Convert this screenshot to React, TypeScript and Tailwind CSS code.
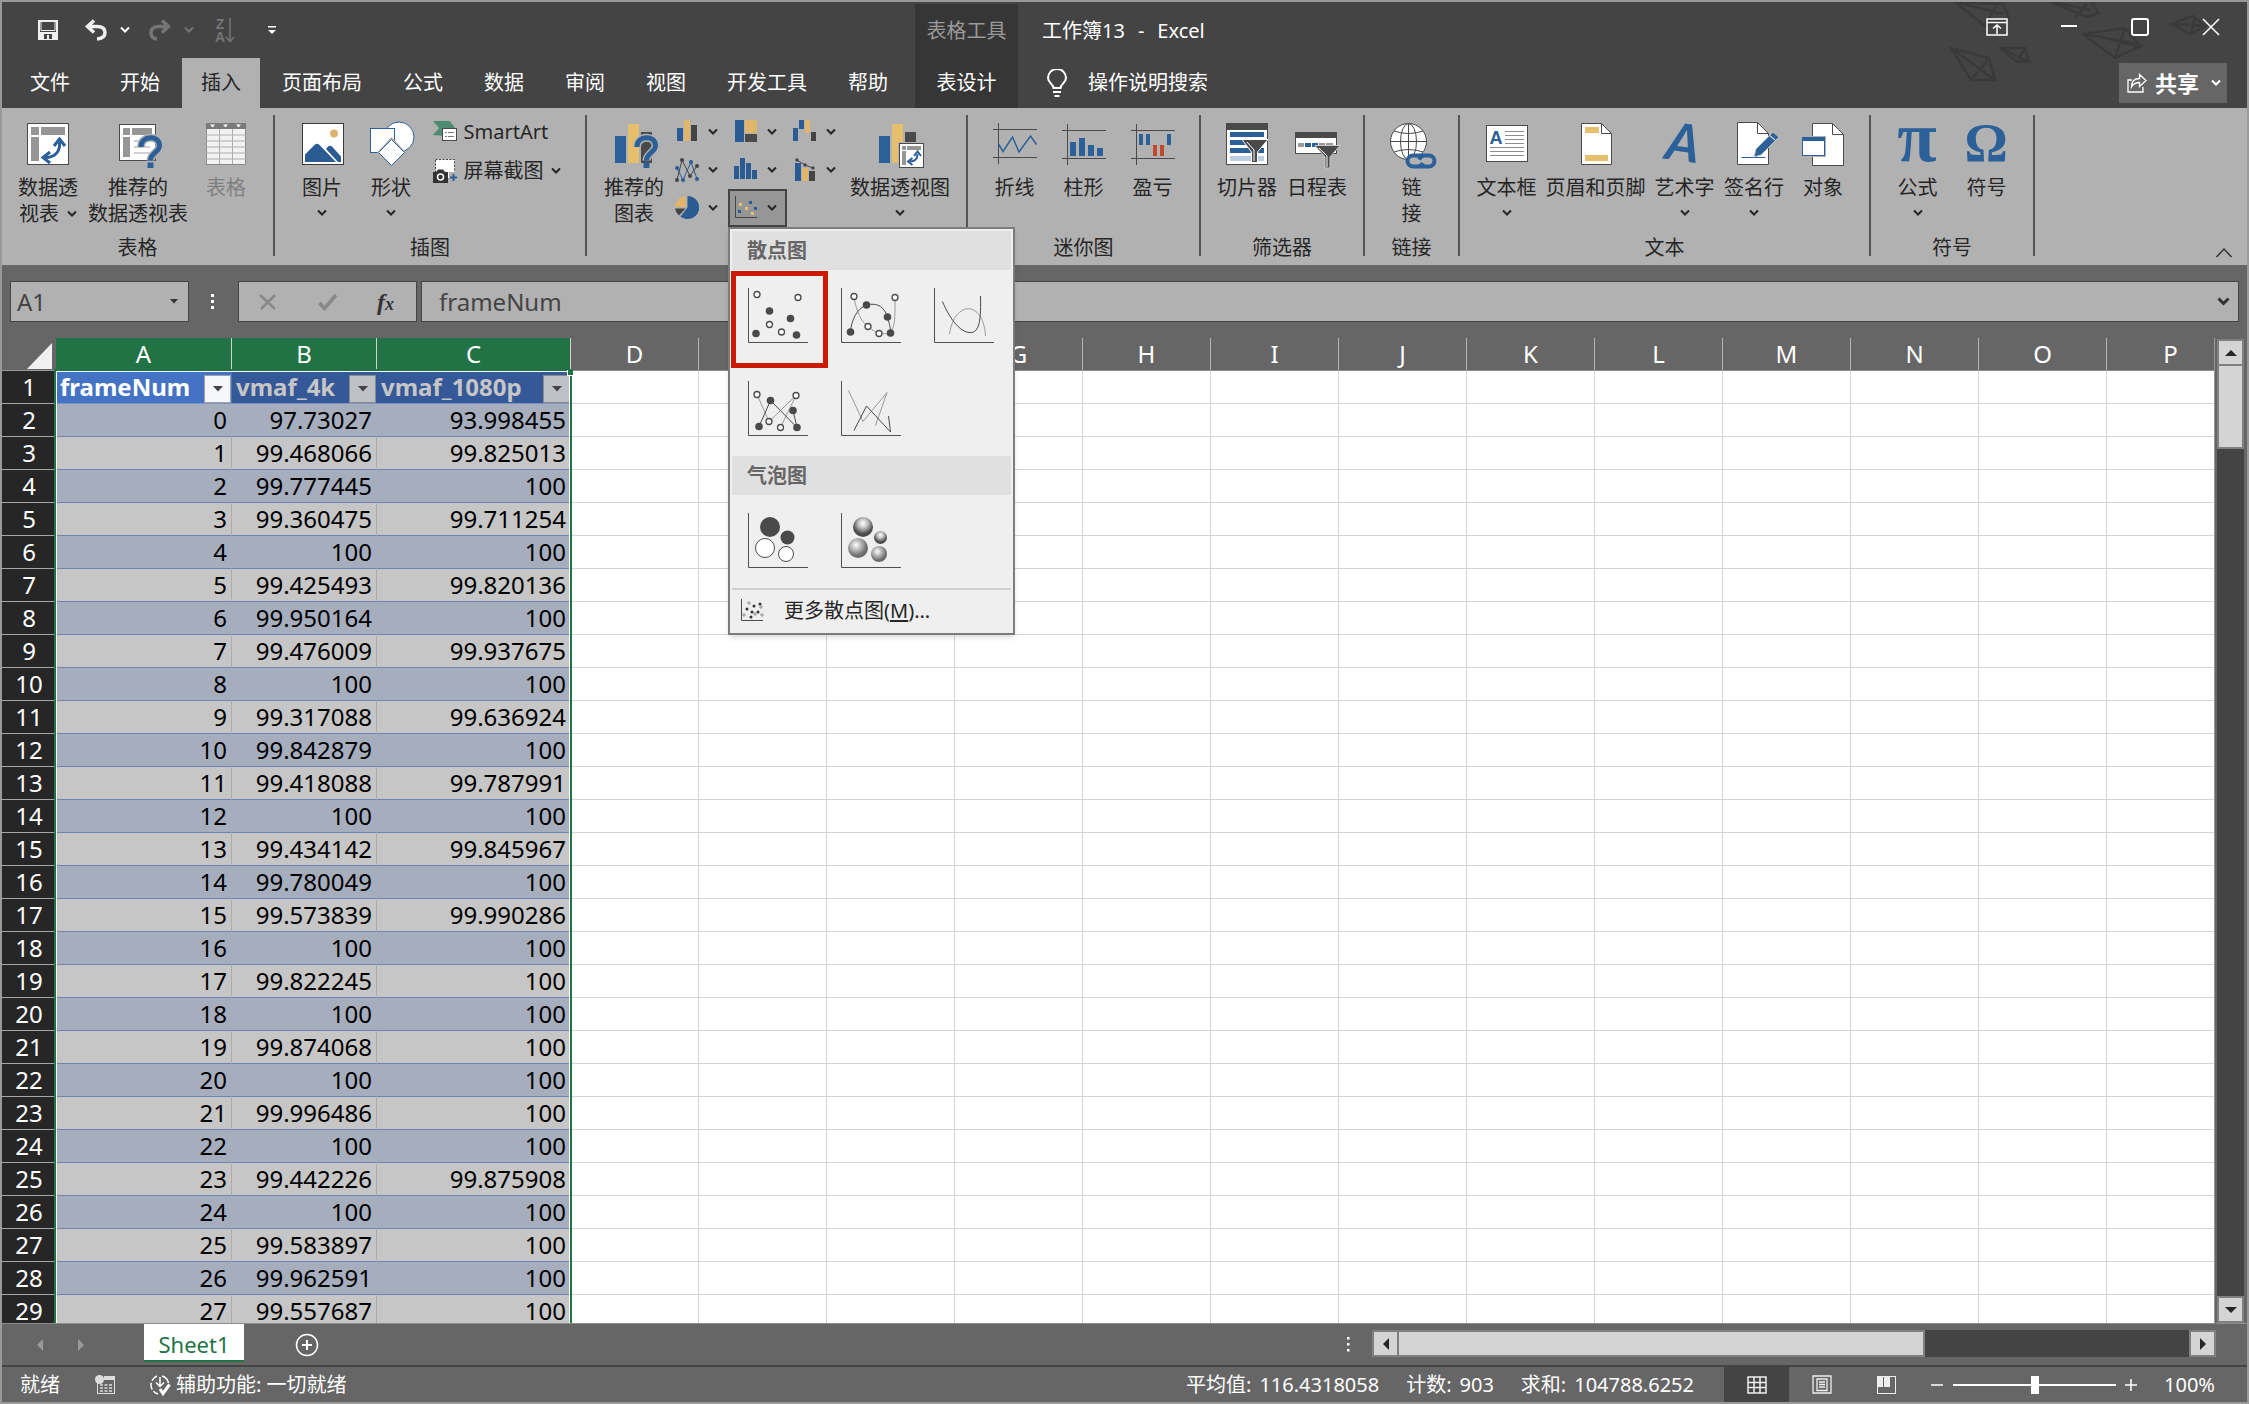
import React from "react";
import type { ReactNode } from "react";

const BLUE = "#2b6098";
const GOLD = "#e6bf6c";
const INK = "#4a4a4a";

/* ---------- shared glyphs ---------- */

function Chevron({ className = "" }: { className?: string }) {
  return (
    <svg width="10" height="8" viewBox="0 0 10 8" fill="none" stroke="currentColor" strokeWidth="2" className={className}>
      <path d="M1 1.5l4 4 4-4" />
    </svg>
  );
}

function Big({ children }: { children: ReactNode }) {
  return (
    <svg width="48" height="48" viewBox="0 0 48 48" fill="none" className="shrink-0 overflow-visible">
      {children}
    </svg>
  );
}

function Small({ children }: { children: ReactNode }) {
  return (
    <svg width="24" height="24" viewBox="0 0 24 24" fill="none" className="shrink-0">
      {children}
    </svg>
  );
}

function SwapArrow() {
  return (
    <g>
      <path d="M35.500 22c1 10-5 15.500-14 15.500" stroke={BLUE} strokeWidth="3" />
      <path d="M30 26l5.500-7 5.500 7M26 32l-7 5.500 7 5.500" stroke={BLUE} strokeWidth="3" />
    </g>
  );
}

function Question() {
  const d = "M27 27c0-12 18.500-12 18.500-1.500 0 7-9 7.500-9 15";
  return (
    <g>
      <path d={d} stroke="#b1b1b1" strokeWidth="8" />
      <path d={d} stroke={BLUE} strokeWidth="5" />
      <rect x="33.500" y="42.500" width="6" height="5.500" fill={BLUE} />
    </g>
  );
}

/* ---------- large ribbon icons ---------- */

const PivotIcon = () => (
  <Big>
    <rect x="3.5" y="3.5" width="41" height="41" fill="#fff" stroke={INK} />
    <path d="M7 7h8v8H7zM17 7h24v8H17zM7 17h8v24H7z" fill="#969696" />
    <SwapArrow />
  </Big>
);

const RecommendedPivotIcon = () => (
  <Big>
    <rect x="5.5" y="4.5" width="36" height="36" fill="#fff" stroke={INK} />
    <path d="M9 8h7v7H9zM18 8h20v7H18zM9 17h7v20H9z" fill="#969696" />
    <path d="M20 21h16M20 27h16M20 33h16" stroke="#d0d0d0" strokeWidth="2" />
    <Question />
  </Big>
);

const TableIcon = () => (
  <Big>
    <rect x="4.500" y="3.500" width="39" height="41" fill="#f2f2f2" stroke="#8a8a8a" />
    <rect x="4" y="3" width="40" height="6" fill="#7a7a7a" />
    <path d="M4 15h40M4 21h40M4 27h40M4 33h40M4 39h40M17.500 9v35M30.500 9v35" stroke="#adadad" />
    <path d="M8 4.500h5l-2.500 3zM21 4.500h5l-2.500 3zM34 4.500h5l-2.500 3z" fill="#fff" />
  </Big>
);

const PictureIcon = () => (
  <Big>
    <rect x="4.500" y="3.500" width="41" height="41" fill="#fff" stroke="#3a3a3a" />
    <circle cx="36" cy="13.500" r="4" fill="#e0b56c" />
    <path d="M7 42v-7.500L17 24.500q2-1.500 4 0L38 42z" fill="#2a5b92" />
    <path d="M28 29l2-2.500q2-1.500 4 0l9 10V42h-3z" fill="#2a5b92" />
  </Big>
);

const ShapesIcon = () => (
  <Big>
    <circle cx="32" cy="17" r="15" fill="#fff" stroke={BLUE} />
    <rect x="3.500" y="8.500" width="24" height="24" fill="#fff" stroke={BLUE} />
    <path d="M24.500 17L39 32.500 24.500 48 10 32.500z" fill="#b1b1b1" />
    <path d="M24.500 19.500L37.500 32.500 24.500 45.500 11.500 32.500z" fill="#fff" stroke={BLUE} />
  </Big>
);

const RecommendedChartIcon = () => (
  <Big>
    <rect x="5" y="16" width="11" height="27" fill={BLUE} />
    <rect x="18" y="4" width="11" height="39" fill={GOLD} />
    <rect x="31" y="12" width="11" height="31" fill={INK} />
    <Question />
  </Big>
);

const PivotChartIcon = () => (
  <Big>
    <rect x="3" y="16" width="11" height="27" fill={BLUE} />
    <rect x="16" y="4" width="11" height="39" fill={GOLD} />
    <rect x="29" y="12" width="11" height="20" fill={INK} />
    <rect x="22" y="22" width="27" height="27" fill="#b1b1b1" />
    <rect x="23.500" y="23.500" width="24" height="24" fill="#fff" stroke={INK} />
    <path d="M26 26h4v4h-4zM31 26h14v4H31zM26 31h4v14h-4z" fill="#969696" />
    <path d="M41.500 34c0 5-3 7.500-7.500 7.500" stroke={BLUE} strokeWidth="2" />
    <path d="M38 36l3.500-4.500L45 36M36.500 38L32 41.500l4.500 3.500" stroke={BLUE} strokeWidth="2" />
  </Big>
);

const SparkLineIcon = () => (
  <Big>
    <path d="M2 9.500h44M2 37.500h44M7.500 3v41" stroke={INK} />
    <path d="M7.500 24l4.500 7.500L21.500 17 28 32l11.500-16 6 8.500" stroke={BLUE} strokeWidth="1.500" />
  </Big>
);

const SparkColumnIcon = () => (
  <Big>
    <path d="M2 10.500h44M2 38.500h44M7.500 4v41" stroke={INK} />
    <path d="M10 22h6v14h-6zM19 18h6v18h-6zM28 25h6v11h-6zM37 28h6v8h-6z" fill={BLUE} />
  </Big>
);

const WinLossIcon = () => (
  <Big>
    <path d="M2 10.500h44M2 38.500h44M7.500 4v41" stroke={INK} />
    <path d="M10 14h4v11h-4zM17 14h4v11h-4zM38 14h4v11h-4z" fill={BLUE} />
    <path d="M24 25h4v11h-4zM31 25h4v11h-4z" fill="#c04a2b" />
  </Big>
);

const SlicerIcon = () => (
  <Big>
    <rect x="3.500" y="3.500" width="41" height="41" fill="#fff" stroke={INK} />
    <rect x="3" y="3" width="42" height="7" fill={INK} />
    <path d="M7 12h34v5H7zM7 20h34v5H7zM7 28h34v5H7z" fill={BLUE} />
    <rect x="7" y="36" width="34" height="5" fill="#bccde4" />
    <path d="M19 19.500h26L34.500 32v10.500h-6V32z" fill={INK} stroke="#fff" />
    <path d="M24 22l7 8v11" stroke="#fff" />
  </Big>
);

const TimelineIcon = () => (
  <Big>
    <rect x="2.500" y="12.500" width="41" height="21" fill="#fff" stroke={INK} />
    <rect x="2" y="12" width="42" height="6" fill={INK} />
    <path d="M5 23h6v4H5zM26 23h6v4h-6zM33 23h7v4h-7z" fill="#9a9a9a" />
    <path d="M12 23h6v4h-6zM19 23h6v4h-6z" fill={BLUE} />
    <path d="M22 25.500h25L37 37v11h-5V37z" fill={INK} stroke="#c8c8c8" />
    <path d="M26 28l8 8v11" stroke="#fff" />
  </Big>
);

const LinkIcon = () => (
  <Big>
    <circle cx="20.500" cy="21.500" r="18" fill="#fff" stroke={INK} />
    <ellipse cx="20.500" cy="21.500" rx="8" ry="18" stroke={INK} />
    <path d="M20.500 3.500v36M2.500 21.500h36M6 11q14.500 5 29 0M6 32q14.500-5 29 0" stroke={INK} />
    <g strokeLinecap="round" strokeWidth="9" stroke="#b1b1b1">
      <path d="M23 41h21" />
    </g>
    <g stroke={BLUE} strokeWidth="4">
      <path d="M34 35.500h-9a5.500 5.500 0 0 0 0 11h5q3 0 5-3.500" />
      <path d="M31 46.500h10a5.500 5.500 0 0 0 0-11h-5q-3 0-5 4" />
    </g>
  </Big>
);

const TextBoxIcon = () => (
  <Big>
    <rect x="3.500" y="5.500" width="41" height="36" fill="#fff" stroke={INK} />
    <text x="13" y="24" textAnchor="middle" fontSize="18" fontWeight="700" fill={BLUE} fontFamily="Liberation Sans, sans-serif">A</text>
    <path d="M22 11.500h19M22 15.500h19M22 19.500h19M22 23.500h19M7 27.500h34M7 31.500h34M7 35.500h34" stroke="#8c8c8c" />
  </Big>
);

const HeaderFooterIcon = () => (
  <Big>
    <path d="M9.500 3.500h20l10 10v31h-30z" fill="#fff" stroke={INK} />
    <path d="M29.500 3.500v10h10" stroke={INK} />
    <path d="M13 7h14v6H13zM13 35h23v6H13z" fill={GOLD} />
  </Big>
);

const WordArtIcon = () => (
  <Big>
    <g transform="rotate(8 22 24)">
      <text x="22" y="41" textAnchor="middle" fontSize="52" fontWeight="700" fontStyle="italic" fill={BLUE} fontFamily="Lato, sans-serif">A</text>
    </g>
  </Big>
);

const SignatureIcon = () => (
  <Big>
    <path d="M7.500 2.500h20l11 11v31h-31z" fill="#fff" stroke={INK} />
    <path d="M27.500 2.500v11h11" stroke={INK} />
    <path d="M11.500 37.500h24" stroke={BLUE} />
    <path d="M24 37l2-8 17-17 6 5-18 18z" fill={BLUE} stroke="#c4c4c4" />
    <path d="M39 15l6 5" stroke="#c4c4c4" strokeWidth="1.500" />
  </Big>
);

const ObjectIcon = () => (
  <Big>
    <path d="M13.500 3.500h20l11 11v31h-31z" fill="#fff" stroke={INK} />
    <path d="M33.500 3.500v11h11" stroke={INK} />
    <rect x="2" y="16" width="25" height="21" fill="#b1b1b1" />
    <rect x="3.500" y="17.500" width="22" height="18" fill="#fff" stroke={BLUE} />
    <rect x="3" y="17" width="23" height="4" fill={BLUE} />
  </Big>
);

const PiIcon = () => (
  <Big>
    <text x="23" y="41" textAnchor="middle" fontSize="72" fontWeight="700" fill={BLUE} fontFamily="Liberation Serif, serif">π</text>
  </Big>
);

const OmegaIcon = () => (
  <Big>
    <text x="23" y="41" textAnchor="middle" fontSize="54" fontWeight="700" fill={BLUE} fontFamily="Liberation Serif, serif">Ω</text>
  </Big>
);

/* ---------- small chart icons ---------- */

const chartButtons: { label: string; icon: ReactNode }[] = [
  {
    label: "柱形图",
    icon: (
      <Small>
        <path d="M2 8h6v13H2z" fill="#2a5b92" />
        <path d="M9 0h6v21H9z" fill="#e0b56c" />
        <path d="M16 5h6v16h-6z" fill="#444" />
      </Small>
    ),
  },
  {
    label: "层次结构图",
    icon: (
      <Small>
        <path d="M1 0h9v22H1z" fill="#2a5b92" />
        <path d="M11 0h12v13H11z" fill="#e0b56c" />
        <path d="M11 14h12v8H11z" fill={INK} />
      </Small>
    ),
  },
  {
    label: "瀑布图",
    icon: (
      <Small>
        <path d="M0 8h5v13H0zM6 0h5v9H6z" fill="#2a5b92" />
        <path d="M12 0h5v13h-5z" fill="#e0b56c" />
        <path d="M18 12h5v9h-5z" fill="#444" />
      </Small>
    ),
  },
  {
    label: "折线图",
    icon: (
      <Small>
        <path d="M2 22L7 2l8 16 7-10" stroke="#444" />
        <path d="M2 10l6 12 8-18 6 17" stroke="#2a5b92" />
        <g fill="#444">
          <circle cx="2" cy="22" r="2" /><circle cx="7" cy="2" r="2" /><circle cx="15" cy="18" r="2" /><circle cx="22" cy="8" r="2" />
        </g>
        <g fill="#2a5b92">
          <circle cx="2" cy="10" r="2" /><circle cx="8" cy="22" r="2" /><circle cx="16" cy="4" r="2" /><circle cx="22" cy="21" r="2" />
        </g>
      </Small>
    ),
  },
  {
    label: "统计图",
    icon: (
      <Small>
        <path d="M0 8h5v13H0zM6 0h5v21H6zM12 5h5v16h-5zM18 12h5v9h-5z" fill="#2a5b92" />
      </Small>
    ),
  },
  {
    label: "组合图",
    icon: (
      <Small>
        <path d="M2 5h6v18H2z" fill="#2a5b92" />
        <path d="M9 10h6v13H9z" fill="#e0b56c" />
        <path d="M16 13h6v10h-6z" fill="#444" />
        <path d="M4 2l8 5 8 3" stroke="#444" />
        <circle cx="4" cy="2" r="1.700" fill="#444" /><circle cx="12" cy="7" r="1.700" fill="#444" /><circle cx="20" cy="10" r="1.700" fill="#444" />
      </Small>
    ),
  },
  {
    label: "饼图",
    icon: (
      <Small>
        <path d="M12.500 11.500V0a11.500 11.500 0 1 1-7 20.500z" fill="#2a5b92" />
        <path d="M11 11V0A11.500 11.500 0 0 0 0 11z" fill="#e0b56c" />
        <path d="M10.500 12.500H0a11 11 0 0 0 4 7z" fill="#444" />
      </Small>
    ),
  },
];

const ScatterSmall = () => (
  <Small>
    <path d="M1.500 0v21.500H23" stroke="#444" />
    <path d="M5 7h3v3H5zM11 11h3v3h-3zM17 16h3v3h-3z" fill="#e8bd74" />
    <path d="M15 5h3v3h-3zM20 11h3v3h-3zM4 14h3v3H4z" fill="#2a5b92" />
  </Small>
);

/* ---------- chart gallery ---------- */

type Dot = [number, number];

function Thumb({ children, filled = [], open = [] }: { children?: ReactNode; filled?: Dot[]; open?: Dot[] }) {
  return (
    <svg width="60" height="56" viewBox="0 0 60 56" fill="none">
      <path d="M.5 0v54.500H60" stroke="#505050" />
      {children}
      {filled.map(([x, y]) => (
        <circle key={`${x}-${y}`} cx={x} cy={y} r="3.800" fill={INK} />
      ))}
      {open.map(([x, y]) => (
        <circle key={`${x}-${y}`} cx={x} cy={y} r="3" fill="#fff" stroke={INK} strokeWidth="1.300" />
      ))}
    </svg>
  );
}

function Sphere({ cx, cy, r, id }: { cx: number; cy: number; r: number; id: string }) {
  return <circle cx={cx} cy={cy} r={r} fill={`url(#${id})`} />;
}

const scatterThumbs: { label: string; art: ReactNode }[] = [
  {
    label: "散点图",
    art: <Thumb open={[[9, 6.5], [50, 9.5], [21.5, 36.5], [33.5, 44]]} filled={[[21.5, 23], [42.5, 30.5], [8, 45.5], [48.5, 47]]} />,
  },
  {
    label: "带平滑线和数据标记的散点图",
    art: (
      <Thumb open={[[13, 8.5], [54, 9.5], [27, 38.5], [38, 45.5]]} filled={[[25.500, 17], [46.5, 29], [9.5, 44], [49.5, 45]]}>
        <path d="M13 8.500c2 15 8 26 14 30 5 4 8 6.500 12 7 14 1.500 15.500-5 15-36" stroke="#9a9a9a" />
        <path d="M9.500 44c1-12 6-23 16-27 12-3 18 3 21 12 1 5 3 8 3 16" stroke={INK} />
      </Thumb>
    ),
  },
  {
    label: "带平滑线的散点图",
    art: (
      <Thumb>
        <path d="M15.500 46c5-34 34-34 36 2" stroke="#9a9a9a" />
        <path d="M8.500 13.500c6 15 17 31 27.500 31 10 1 11-15 10.500-36.500" stroke={INK} />
      </Thumb>
    ),
  },
  {
    label: "带直线和数据标记的散点图",
    art: (
      <Thumb open={[[9, 13.5], [48, 14.5], [21, 40.5], [32.5, 46.5]]} filled={[[22.5, 19.5], [45, 29.5], [11, 45.5], [49, 46.5]]}>
        <path d="M9 13.500l12 27 27-26-15.500 32" stroke="#9a9a9a" />
        <path d="M11 45.500l11.500-26 26.500 27-4-17" stroke={INK} />
      </Thumb>
    ),
  },
  {
    label: "带直线的散点图",
    art: (
      <Thumb>
        <path d="M7.500 9.500L22 40.500l24-29-11.500 33" stroke="#9a9a9a" />
        <path d="M13 49.500L25.500 25l24 26-2-16" stroke={INK} />
      </Thumb>
    ),
  },
];

const bubbleThumbs: { label: string; art: ReactNode }[] = [
  {
    label: "气泡图",
    art: (
      <Thumb>
        <circle cx="22" cy="14" r="10" fill={INK} />
        <circle cx="39.500" cy="24.500" r="7" fill={INK} />
        <circle cx="17" cy="35" r="9.500" fill="#fff" stroke={INK} />
        <circle cx="38" cy="41" r="7.500" fill="#fff" stroke={INK} />
      </Thumb>
    ),
  },
  {
    label: "三维气泡图",
    art: (
      <Thumb>
        <defs>
          <radialGradient id="sphereDark" cx="0.5" cy="0.32" r="0.65">
            <stop offset="0" stopColor="#fff" />
            <stop offset="0.35" stopColor="#c4c4c4" />
            <stop offset="0.8" stopColor="#4c4c4c" />
          </radialGradient>
          <radialGradient id="sphereLight" cx="0.4" cy="0.35" r="0.65">
            <stop offset="0" stopColor="#fff" />
            <stop offset="0.4" stopColor="#b8b8b8" />
            <stop offset="0.85" stopColor="#6a6a6a" />
          </radialGradient>
        </defs>
        <Sphere cx={22} cy={14} r={10} id="sphereDark" />
        <Sphere cx={39.500} cy={24.500} r={6.500} id="sphereDark" />
        <Sphere cx={17} cy={35} r={10} id="sphereLight" />
        <Sphere cx={38} cy={41} r={8} id="sphereLight" />
      </Thumb>
    ),
  },
];

function ScatterMenu() {
  return (
    <div className="absolute left-0 top-full z-20 w-[287px] border-2 border-[#7c7c7c] bg-[#efefef] p-0.5 shadow-md">
      <h3 className="h-[39px] bg-[#e0e0e0] pl-[15px] text-xl font-bold leading-[39px] text-[#666]">散点图</h3>
      <div className="grid grid-cols-3">
        {scatterThumbs.map((t, i) => (
          <button key={t.label} aria-label={t.label} className="relative flex h-[93px] items-center justify-center pb-0.5 pr-0.5">
            {t.art}
            {i === 0 && <span className="absolute -inset-x-px top-px h-[97px] w-[97px] border-5 border-[#cc1a00]" />}
          </button>
        ))}
      </div>
      <h3 className="h-[39px] bg-[#e0e0e0] pl-[15px] text-xl font-bold leading-[39px] text-[#666]">气泡图</h3>
      <div className="grid grid-cols-3">
        {bubbleThumbs.map((t) => (
          <button key={t.label} aria-label={t.label} className="flex h-[93px] items-center justify-center pb-0.5 pr-0.5">
            {t.art}
          </button>
        ))}
      </div>
      <button className="flex h-[43px] w-full items-center gap-5 border-t-2 border-[#d0d0d0] pl-2 text-xl text-[#262626]">
        <Small>
          <path d="M1.500 0v21.500H23" stroke={INK} />
          <g fill="#333">
            <circle cx="7" cy="10" r="1.500" /><circle cx="14" cy="7" r="1.500" /><circle cx="20" cy="5" r="1.500" />
            <circle cx="12" cy="13" r="1.500" /><circle cx="18" cy="13" r="1.500" /><circle cx="11" cy="18" r="1.500" />
          </g>
          <g stroke="#777" strokeWidth=".8">
            <circle cx="9" cy="4" r="1.200" /><circle cx="21" cy="8" r="1.200" /><circle cx="4" cy="16" r="1.200" />
            <circle cx="15" cy="15" r="1.200" /><circle cx="22" cy="16" r="1.200" />
          </g>
        </Small>
        <span>更多散点图(<u className="underline-offset-2">M</u>)...</span>
      </button>
    </div>
  );
}

/* ---------- ribbon ---------- */

function Group({ label, className, children }: { label?: string; className: string; children: ReactNode }) {
  return (
    <>
      <section aria-label={label} className={`flex shrink-0 flex-col ${className}`}>
        <div className="flex flex-1 justify-center">{children}</div>
        <div className="mb-1 h-[26px] text-center leading-[26px]">{label}</div>
      </section>
      <div className="mb-[9px] mt-[7px] w-0.5 shrink-0 bg-[#555]" />
    </>
  );
}

function BigButton({
  icon,
  lines,
  arrow = "none",
  className,
  disabled = false,
}: {
  icon: ReactNode;
  lines: string[];
  arrow?: "none" | "inline" | "below";
  className: string;
  disabled?: boolean;
}) {
  return (
    <button disabled={disabled} className={`flex shrink-0 flex-col items-center whitespace-nowrap pt-3 disabled:text-[#808080] ${className}`}>
      {icon}
      <span className="mt-[7px] flex flex-col items-center leading-[26px]">
        {lines.map((line, i) => (
          <span key={line} className="flex items-center gap-2">
            {line}
            {arrow === "inline" && i === lines.length - 1 && <Chevron />}
          </span>
        ))}
      </span>
      {arrow === "below" && <Chevron className="mt-2" />}
    </button>
  );
}

function Ribbon() {
  return (
    <div className="relative z-10 flex h-[157px] shrink-0 bg-[#b1b1b1] text-xl text-[#262626]">
      <Group label="表格" className="w-[271px]">
        <div className="flex pr-[3px]">
          <BigButton className="w-[76px]" icon={<PivotIcon />} lines={["数据透", "视表"]} arrow="inline" />
          <BigButton className="w-[104px]" icon={<RecommendedPivotIcon />} lines={["推荐的", "数据透视表"]} />
          <BigButton className="w-[72px]" icon={<TableIcon />} lines={["表格"]} disabled />
        </div>
      </Group>
      <Group label="插图" className="w-[310px]">
        <div className="flex pr-3">
          <BigButton className="w-[69px]" icon={<PictureIcon />} lines={["图片"]} arrow="below" />
          <BigButton className="w-[69px]" icon={<ShapesIcon />} lines={["形状"]} arrow="below" />
          <div className="flex flex-col pl-[7px] pt-1">
            <button className="flex h-[39px] items-center gap-[7px]">
              <Small>
                <path d="M0 1h17l5 7H13v8L0 15l6-7z" fill="#4d8c73" />
                <rect x="9.500" y="8.500" width="14" height="12" fill="#fff" stroke={INK} />
                <path d="M12 12.500h2M15 12.500h6M12 16.500h2M15 16.500h6" stroke="#777" />
              </Small>
              SmartArt
            </button>
            <button className="flex h-[39px] items-center gap-[7px]">
              <Small>
                <rect x="2.500" y=".5" width="19" height="19" fill="#fff" stroke="#444" strokeDasharray="2 1.500" />
                <path d="M0 13h3l2-2.500h5l2 2.500h3v11H0z" fill="#333" />
                <circle cx="7.500" cy="18" r="3" stroke="#fff" strokeWidth="1.500" />
                <path d="M16 13h8v11h-8z" fill="#b1b1b1" />
                <path d="M20.500 15v7M17 18.500h7" stroke={BLUE} strokeWidth="2" />
              </Small>
              屏幕截图
              <Chevron />
            </button>
          </div>
        </div>
      </Group>
      <Group className="w-[379px]">
        <BigButton className="w-[70px]" icon={<RecommendedChartIcon />} lines={["推荐的", "图表"]} />
        <div className="grid grid-cols-3 grid-rows-[38px_38px_38px] pt-[5px]">
          {chartButtons.map((b) => (
            <button key={b.label} aria-label={b.label} className="flex w-[59px] items-center gap-[9px] pl-1.5">
              {b.icon}
              <Chevron />
            </button>
          ))}
          <div className="relative">
            <button
              aria-label="散点图"
              aria-expanded="true"
              className="flex h-[38px] w-[59px] items-center gap-[9px] border-2 border-[#444] bg-[#969696] pl-1"
            >
              <ScatterSmall />
              <Chevron />
            </button>
            <ScatterMenu />
          </div>
        </div>
        <BigButton className="w-[108px]" icon={<PivotChartIcon />} lines={["数据透视图"]} arrow="below" />
      </Group>
      <Group label="迷你图" className="w-[231px]">
        <BigButton className="w-[69px]" icon={<SparkLineIcon />} lines={["折线"]} />
        <BigButton className="w-[69px]" icon={<SparkColumnIcon />} lines={["柱形"]} />
        <BigButton className="w-[69px]" icon={<WinLossIcon />} lines={["盈亏"]} />
      </Group>
      <Group label="筛选器" className="w-[162px]">
        <BigButton className="w-[70px]" icon={<SlicerIcon />} lines={["切片器"]} />
        <BigButton className="w-[70px]" icon={<TimelineIcon />} lines={["日程表"]} />
      </Group>
      <Group label="链接" className="w-[93px]">
        <BigButton className="w-[70px]" icon={<LinkIcon />} lines={["链", "接"]} />
      </Group>
      <Group label="文本" className="w-[409px]">
        <BigButton className="w-[70px]" icon={<TextBoxIcon />} lines={["文本框"]} arrow="below" />
        <BigButton className="w-[108px]" icon={<HeaderFooterIcon />} lines={["页眉和页脚"]} />
        <BigButton className="w-[70px]" icon={<WordArtIcon />} lines={["艺术字"]} arrow="below" />
        <BigButton className="w-[69px]" icon={<SignatureIcon />} lines={["签名行"]} arrow="below" />
        <BigButton className="w-[69px]" icon={<ObjectIcon />} lines={["对象"]} />
      </Group>
      <Group label="符号" className="w-[162px]">
        <BigButton className="w-[69px]" icon={<PiIcon />} lines={["公式"]} arrow="below" />
        <BigButton className="w-[69px]" icon={<OmegaIcon />} lines={["符号"]} />
      </Group>
      <button aria-label="折叠功能区" className="mb-1.5 ml-auto mr-3.5 self-end text-[#333]">
        <svg width="18" height="12" viewBox="0 0 18 12" fill="none" stroke="currentColor" strokeWidth="1.500">
          <path d="M1.500 10L9 2l7.500 8" />
        </svg>
      </button>
    </div>
  );
}

/* ---------- title bar ---------- */

const tabs = ["开始", "插入", "页面布局", "公式", "数据", "审阅", "视图", "开发工具", "帮助"];

function PaperPlanes() {
  return (
    <svg width="300" height="84" viewBox="0 0 300 84" fill="none" stroke="#3a3a3a" strokeWidth="2.500" className="absolute right-0 top-0">
      <path d="M8 0l30 24 24-8-6-14zM8 0l48 12M38 24l12-22" />
      <path d="M104 0l36 15 12-4-8-11M104 0l40 8M128 16l12-14" />
      <path d="M136 32l32 24 26-12-16-18zM136 32l56 10M168 56l10-30M150 34l40 10" />
      <path d="M224 22l20 10 14-8-12-10zM224 22l34 2M244 32l4-18" />
      <path d="M4 46l20 32h24l-6-22zM4 46l44 32M24 78l18-22" />
      <path d="M54 46l16 14h12l-4-14zM54 46l28 14M70 60l8-14" />
    </svg>
  );
}

function TitleBar() {
  return (
    <header className="relative flex h-[106px] shrink-0 bg-[#444] text-xl text-white">
      <PaperPlanes />
      <div className="flex w-[913px] shrink-0 flex-col">
        <div className="flex h-14 items-center pl-9">
          <button aria-label="保存">
            <svg width="20" height="20" viewBox="0 0 20 20" fill="none" stroke="#f0f0f0" strokeWidth="2">
              <path d="M1 1h18v18H1z" />
              <path d="M3 2v8.500h14V2" strokeWidth="1" />
              <path d="M2 12h16v7H2z" fill="#f0f0f0" stroke="none" />
              <path d="M6 14h8v5H6z" fill="#444" stroke="none" />
              <path d="M9 15h2v4H9z" fill="#f0f0f0" stroke="none" />
            </svg>
          </button>
          <button aria-label="撤消" className="ml-[26px]">
            <svg width="24" height="22" viewBox="0 0 24 22" fill="none" stroke="#f0f0f0" strokeWidth="3.500">
              <path d="M10 1.500L3.500 7.500l6.500 6M3 7.500h10q8 0 8 6T13 20" />
            </svg>
          </button>
          <button aria-label="撤消选项" className="ml-3"><Chevron /></button>
          <button aria-label="恢复" className="ml-[18px]">
            <svg width="24" height="22" viewBox="0 0 24 22" fill="none" stroke="#757575" strokeWidth="3.500">
              <path d="M14 1.500l6.500 6-6.500 6M21 7.500H11q-8 0-8 6T9 20" />
            </svg>
          </button>
          <button aria-label="恢复选项" className="ml-3 text-[#757575]"><Chevron /></button>
          <button aria-label="降序排序" className="ml-5">
            <svg width="22" height="26" viewBox="0 0 22 26" fill="none" stroke="#757575" strokeWidth="1.500" className="overflow-visible">
              <text x="6" y="12" textAnchor="middle" fontSize="14" fontWeight="700" fill="#757575" stroke="none" fontFamily="Liberation Sans, sans-serif">Z</text>
              <text x="6" y="25" textAnchor="middle" fontSize="14" fontWeight="700" fill="#757575" stroke="none" fontFamily="Liberation Sans, sans-serif">A</text>
              <path d="M16 1v23M12 20l4 4.500 4-4.500" />
            </svg>
          </button>
          <button aria-label="自定义快速访问工具栏" className="ml-[31px]">
            <svg width="10" height="10" viewBox="0 0 10 10" fill="#fff">
              <path d="M1 1h8v1.500H1zM1 5h8L5 9z" />
            </svg>
          </button>
        </div>
        <nav className="flex flex-1 gap-[3px]">
          <button className="w-24">文件</button>
          {tabs.map((t) => (
            <button
              key={t}
              aria-current={t === "插入" ? "page" : undefined}
              className={`whitespace-nowrap px-[19px] ${t === "插入" ? "bg-[#b1b1b1] text-[#262626]" : ""}`}
            >
              {t}
            </button>
          ))}
        </nav>
      </div>
      <div className="mt-0.5 flex w-[103px] shrink-0 flex-col bg-[#363636]">
        <div className="flex h-[54px] items-center justify-center text-[#999]">表格工具</div>
        <button className="flex-1">表设计</button>
      </div>
      <div className="relative flex flex-1 flex-col">
        <div className="flex h-14 items-center">
          <h1 className="ml-6 flex gap-[13px] pt-0.5">
            <span>工作簿13</span>
            <span>-</span>
            <span>Excel</span>
          </h1>
          <div className="ml-auto flex items-center pb-1.5 pr-[27px]">
            <button aria-label="功能区显示选项">
              <svg width="22" height="18" viewBox="0 0 22 18" fill="none" stroke="#fff" strokeWidth="1.500">
                <path d="M1 1h20v16H1zM1 4.500h20M11 16V7M7 10.500L11 7l4 3.500" />
              </svg>
            </button>
            <button aria-label="最小化" className="ml-[52px]">
              <svg width="18" height="18" viewBox="0 0 18 18" stroke="#fff" strokeWidth="2"><path d="M1 8h16" /></svg>
            </button>
            <button aria-label="最大化" className="ml-[53px]">
              <svg width="18" height="18" viewBox="0 0 18 18" fill="none" stroke="#fff" strokeWidth="2">
                <rect x="1" y="1" width="16" height="16" rx="2" />
              </svg>
            </button>
            <button aria-label="关闭" className="ml-[53px]">
              <svg width="18" height="18" viewBox="0 0 18 18" stroke="#fff" strokeWidth="1.500"><path d="M1 1l16 16M17 1L1 17" /></svg>
            </button>
          </div>
        </div>
        <div className="flex flex-1 items-center">
          <button className="ml-[29px] flex items-center gap-[21px]">
            <svg width="20" height="28" viewBox="0 0 20 28" fill="none" stroke="#fff" strokeWidth="2">
              <path d="M6.500 19c0-4-5.500-5-5.500-10a9 9 0 0 1 18 0c0 5-5.500 6-5.500 10zM6 23h8M7.500 27h5" />
            </svg>
            操作说明搜索
          </button>
          <button className="ml-auto mr-5 flex h-10 w-[108px] items-center bg-[#666] pl-2 text-[22px] font-bold">
            <svg width="20" height="20" viewBox="0 0 20 20" fill="none" stroke="#fff" strokeWidth="1.300">
              <path d="M5 7H1v12h15v-5" />
              <path d="M4.500 14c0-6 3-8.500 8-8.500V1.500l6.500 6-6.500 6v-4c-4 0-6 1-8 4.500z" />
            </svg>
            <span className="ml-2">共享</span>
            <Chevron className="ml-3" />
          </button>
        </div>
      </div>
    </header>
  );
}

/* ---------- formula bar ---------- */

function FormulaBar() {
  return (
    <div className="flex h-[73px] shrink-0 items-center pl-2 pr-2 text-2xl text-[#444]">
      <div className="flex h-[41px] w-[179px] items-center border border-[#444] bg-[#b1b1b1] pl-1.5">
        <input aria-label="名称框" defaultValue="A1" className="w-full min-w-0 bg-transparent outline-none" />
        <svg width="8" height="5" viewBox="0 0 8 5" fill="#333" className="mr-2.5 shrink-0"><path d="M0 0h8L4 4.500z" /></svg>
      </div>
      <svg width="4" height="18" viewBox="0 0 4 18" fill="#fff" className="ml-[22px]">
        <path d="M0 1h3v3H0zM0 7h3v3H0zM0 13h3v3H0z" />
      </svg>
      <div className="ml-[23px] flex h-[41px] w-[179px] items-center border border-[#444] bg-[#b1b1b1] pl-5">
        <button aria-label="取消">
          <svg width="18" height="18" viewBox="0 0 18 18" stroke="#888" strokeWidth="2.500"><path d="M1 2l15 14M16 2L2 16" /></svg>
        </button>
        <button aria-label="输入" className="ml-[41px]">
          <svg width="20" height="18" viewBox="0 0 20 18" fill="none" stroke="#888" strokeWidth="3.500"><path d="M1.500 10l5 5.500L18 2" /></svg>
        </button>
        <button aria-label="插入函数" className="ml-[39px] flex items-baseline font-['Liberation_Serif',serif] leading-none font-bold italic text-[#333]">
          f<span className="text-lg leading-none">x</span>
        </button>
      </div>
      <div className="ml-1 flex h-[41px] flex-1 items-center border border-[#444] bg-[#b1b1b1] pl-[17px] pr-2">
        <input aria-label="编辑栏" defaultValue="frameNum" className="w-full min-w-0 bg-transparent outline-none" />
        <button aria-label="展开编辑栏">
          <svg width="13" height="9" viewBox="0 0 13 9" fill="none" stroke="#333" strokeWidth="3"><path d="M1.500 1.500l5 5 5-5" /></svg>
        </button>
      </div>
    </div>
  );
}

/* ---------- grid ---------- */

const values: [string, string][] = [
  ["97.73027", "93.998455"],
  ["99.468066", "99.825013"],
  ["99.777445", "100"],
  ["99.360475", "99.711254"],
  ["100", "100"],
  ["99.425493", "99.820136"],
  ["99.950164", "100"],
  ["99.476009", "99.937675"],
  ["100", "100"],
  ["99.317088", "99.636924"],
  ["99.842879", "100"],
  ["99.418088", "99.787991"],
  ["100", "100"],
  ["99.434142", "99.845967"],
  ["99.780049", "100"],
  ["99.573839", "99.990286"],
  ["100", "100"],
  ["99.822245", "100"],
  ["100", "100"],
  ["99.874068", "100"],
  ["100", "100"],
  ["99.996486", "100"],
  ["100", "100"],
  ["99.442226", "99.875908"],
  ["100", "100"],
  ["99.583897", "100"],
  ["99.962591", "100"],
  ["99.557687", "100"],
];

const dataLetters = ["A", "B", "C"];
const emptyLetters = "DEFGHIJKLMNOP".split("");

function RowHead({ n }: { n: number }) {
  return (
    <th scope="row" className="h-[33px] border-b border-[#a8a8a8] bg-[#262626] p-0 text-center font-normal leading-8 text-white">
      {n}
    </th>
  );
}

function EmptyCells() {
  return (
    <>
      {emptyLetters.map((l) => (
        <td key={l} className="h-[33px] border-b border-r border-[#d4d4d4] bg-white p-0" />
      ))}
    </>
  );
}

function FilterHead({ text, active = false }: { text: string; active?: boolean }) {
  return (
    <td className={`h-[33px] border-b border-[#7c94c4] p-0 ${active ? "bg-[#4472c4] text-white" : "bg-[#345898] text-[#c6c6c6]"}`}>
      <div className="flex h-8 items-center justify-between pl-1 pr-px font-bold leading-8">
        {text}
        <button
          aria-label={`筛选 ${text}`}
          className={`mt-1 flex h-7 w-[27px] items-center justify-center border ${active ? "border-[#a0a0a0] bg-[#f6f7fb]" : "border-[#8a8a8a] bg-[#bfc1c6]"}`}
        >
          <svg width="10" height="6" viewBox="0 0 10 6" fill="#444"><path d="M0 0h10L5 5.500z" /></svg>
        </button>
      </div>
    </td>
  );
}

function Sheet() {
  return (
    <div className="relative min-w-0 flex-1 overflow-hidden border-r border-[#999]">
      <table className="w-max table-fixed border-separate border-spacing-0 text-2xl">
        <colgroup>
          <col className="w-[54px]" />
          <col className="w-[176px]" />
          <col className="w-[145px]" />
          <col className="w-[194px]" />
          {emptyLetters.map((l) => (
            <col key={l} className="w-32" />
          ))}
        </colgroup>
        <thead>
          <tr className="leading-8 text-white">
            <td className="h-[33px] border-b border-[#999] p-0">
              <svg width="25" height="26" viewBox="0 0 25 26" fill="#f0f0f0" className="ml-[25px] mt-1"><path d="M25 0v26H0z" /></svg>
            </td>
            {dataLetters.map((l) => (
              <th key={l} scope="col" className="h-[33px] border-b border-r border-b-[#217346] border-r-[#c8d8c8] bg-[#217346] p-0 font-normal">{l}</th>
            ))}
            {emptyLetters.map((l) => (
              <th key={l} scope="col" className="h-[33px] border-b border-r border-b-[#8c8c8c] border-r-[#b4b4b4] p-0 font-normal">{l}</th>
            ))}
          </tr>
        </thead>
        <tbody>
          <tr>
            <RowHead n={1} />
            <FilterHead text="frameNum" active />
            <FilterHead text="vmaf_4k" />
            <FilterHead text="vmaf_1080p" />
            <EmptyCells />
          </tr>
          {values.map(([b, c], i) => {
            const cell =
              i % 2 === 0
                ? "h-[33px] border-b border-r border-b-[#6c84b4] border-r-[#a6aebd] bg-[#a6aebd] py-0 pl-0 pr-1 text-right leading-8 text-black"
                : "h-[33px] border-b border-r border-b-[#6c84b4] border-r-[#acacac] bg-[#c6c6c6] py-0 pl-0 pr-1 text-right leading-8 text-black";
            return (
              <tr key={i}>
                <RowHead n={i + 2} />
                <td className={cell}>{i}</td>
                <td className={cell}>{b}</td>
                <td className={cell}>{c}</td>
                <EmptyCells />
              </tr>
            );
          })}
        </tbody>
      </table>
      {/* selection frame with its inner highlight and corner handle */}
      <div className="pointer-events-none absolute -bottom-2 left-[52px] top-[31px] w-[518px] border-2 border-[#217346]">
        <div className="h-full border border-white" />
        <span className="absolute -right-[3px] -top-px h-1.5 w-1.5 border-b border-l border-white bg-[#217346]" />
      </div>
    </div>
  );
}

const barPart = "flex shrink-0 items-center justify-center border-2 border-[#808080] bg-[#d4d4d4]";

function VerticalScroll() {
  return (
    <div className="ml-0.5 mr-[3px] mt-px flex w-[27px] flex-col bg-[#444]">
      <button aria-label="向上滚动" className={`${barPart} h-[27px]`}>
        <svg width="12" height="6" viewBox="0 0 12 6" fill="#262626"><path d="M0 6h12L6 0z" /></svg>
      </button>
      <div className={`${barPart} h-[83px] border-t-0`} />
      <button aria-label="向下滚动" className={`${barPart} mt-auto h-[27px]`}>
        <svg width="12" height="6" viewBox="0 0 12 6" fill="#262626"><path d="M0 0h12L6 6z" /></svg>
      </button>
    </div>
  );
}

/* ---------- bottom bars ---------- */

function SheetTabs() {
  return (
    <div className="flex h-11 shrink-0 border-b-2 border-[#444]">
      <div className="flex w-full border-t border-[#8c8c8c]">
        <div className="flex w-[142px] items-center pl-[35px]">
          <button aria-label="上一个工作表">
            <svg width="6" height="12" viewBox="0 0 6 12" fill="#999"><path d="M6 0v12L0 6z" /></svg>
          </button>
          <button aria-label="下一个工作表" className="ml-[35px]">
            <svg width="6" height="12" viewBox="0 0 6 12" fill="#999"><path d="M0 0v12l6-6z" /></svg>
          </button>
        </div>
        <button className="mb-[3px] w-[100px] border-b-2 border-[#217346] bg-white pt-0.5 text-[22px] leading-9 text-[#217346]">Sheet1</button>
        <button aria-label="新工作表" className="ml-[51px]">
          <svg width="24" height="24" viewBox="0 0 24 24" fill="none" stroke="#fff" strokeWidth="1.500">
            <circle cx="12" cy="12" r="10.500" />
            <path d="M12 7v10M7 12h10" strokeWidth="2" />
          </svg>
        </button>
        <svg width="4" height="18" viewBox="0 0 4 18" fill="#fff" className="ml-auto mt-3">
          <path d="M0 1h2.500v2.500H0zM0 7h2.500v2.500H0zM0 13h2.500v2.500H0z" />
        </svg>
        <div className="ml-[21px] mr-[31px] mt-1.5 flex h-[27px] w-[844px] bg-[#444]">
          <button aria-label="向左滚动" className={`${barPart} w-[27px]`}>
            <svg width="6" height="12" viewBox="0 0 6 12" fill="#262626"><path d="M6 0v12L0 6z" /></svg>
          </button>
          <div className={`${barPart} w-[526px] border-l-0`} />
          <button aria-label="向右滚动" className={`${barPart} ml-auto w-[27px]`}>
            <svg width="6" height="12" viewBox="0 0 6 12" fill="#262626"><path d="M0 0v12l6-6z" /></svg>
          </button>
        </div>
      </div>
    </div>
  );
}

function Stat({ name, value }: { name: string; value: string }) {
  return (
    <span className="flex gap-2">
      <span>{name}:</span>
      <span>{value}</span>
    </span>
  );
}

function StatusBar() {
  return (
    <footer className="flex h-[35px] shrink-0 items-center whitespace-nowrap text-xl leading-[35px] text-white">
      <span className="ml-[18px]">就绪</span>
      <button aria-label="录制宏" className="ml-[35px]">
        <svg width="21" height="20" viewBox="0 0 21 20" fill="none">
          <rect x="2.500" y="3.500" width="17" height="15" stroke="#ddd" />
          <path d="M9 1h11v4H9z" fill="#ddd" />
          <path d="M5 10h3M9.500 10h3M14 10h3M5 13h3M9.500 13h3M14 13h3M5 16h3M9.500 16h3M14 16h3" stroke="#ddd" strokeWidth="1.500" />
          <circle cx="4.500" cy="4.500" r="4.500" fill="#ddd" />
        </svg>
      </button>
      <button className="ml-8 flex items-center gap-1">
        <svg width="24" height="24" viewBox="0 0 24 24" fill="none" stroke="#fff" strokeWidth="1.500">
          <path d="M9 3a9.500 9.500 0 0 0 1 18" strokeDasharray="7 2" />
          <path d="M14 3a9.500 9.500 0 0 1 6.500 7M12 4v9M8 9.500l4 4 4-4" />
          <path d="M12 16l3 4.500 6.500-9" strokeWidth="3" />
        </svg>
        辅助功能: 一切就绪
      </button>
      <div className="ml-auto mr-[30px] flex gap-[27px]">
        <Stat name="平均值" value="116.4318058" />
        <Stat name="计数" value="903" />
        <Stat name="求和" value="104788.6252" />
      </div>
      <button aria-label="普通视图" aria-pressed="true" className="flex h-[35px] w-[65px] items-center justify-center bg-[#444]">
        <svg width="20" height="18" viewBox="0 0 20 18" fill="none" stroke="#eee" strokeWidth="1.500">
          <path d="M1 1h18v16H1zM7 1v16M13 1v16M1 6.500h18M1 11.500h18" />
        </svg>
      </button>
      <button aria-label="页面布局视图" className="flex w-[65px] justify-center">
        <svg width="20" height="19" viewBox="0 0 20 19" fill="none" stroke="#eee" strokeWidth="1.300">
          <path d="M1 1h18v17H1zM5 4h10v11.500H5zM7 7h6M7 9.500h6M7 12h6" />
        </svg>
      </button>
      <button aria-label="分页预览" className="flex w-[65px] justify-center">
        <svg width="20" height="18" viewBox="0 0 20 18" fill="none">
          <rect x=".5" y=".5" width="18" height="17" stroke="#eee" />
          <path d="M0 0h6v11H0zM7 0h6v11H7z" fill="#eee" />
        </svg>
      </button>
      <button aria-label="缩小" className="ml-3">
        <svg width="12" height="12" viewBox="0 0 12 12" stroke="#fff" strokeWidth="1.500"><path d="M0 6h12" /></svg>
      </button>
      <input
        type="range"
        aria-label="缩放"
        min={10}
        max={190}
        defaultValue={100}
        className="ml-[10px] h-5 w-[163px] appearance-none bg-transparent [&::-webkit-slider-runnable-track]:h-0.5 [&::-webkit-slider-runnable-track]:bg-white [&::-webkit-slider-thumb]:-mt-2 [&::-webkit-slider-thumb]:h-[18px] [&::-webkit-slider-thumb]:w-2 [&::-webkit-slider-thumb]:appearance-none [&::-webkit-slider-thumb]:bg-white"
      />
      <button aria-label="放大" className="ml-[9px]">
        <svg width="12" height="12" viewBox="0 0 12 12" stroke="#fff" strokeWidth="1.500"><path d="M0 6h12M6 0v12" /></svg>
      </button>
      <button className="ml-6 mr-8 w-[54px] text-right">100%</button>
    </footer>
  );
}

export default function App() {
  return (
    <div
      lang="zh-CN"
      className="flex h-screen flex-col overflow-hidden border-2 border-[#999] bg-[#666] font-['Noto_Sans','Noto_Sans_CJK_SC',sans-serif]"
    >
      <TitleBar />
      <Ribbon />
      <FormulaBar />
      <main className="flex min-h-0 flex-1">
        <Sheet />
        <VerticalScroll />
      </main>
      <SheetTabs />
      <StatusBar />
    </div>
  );
}
